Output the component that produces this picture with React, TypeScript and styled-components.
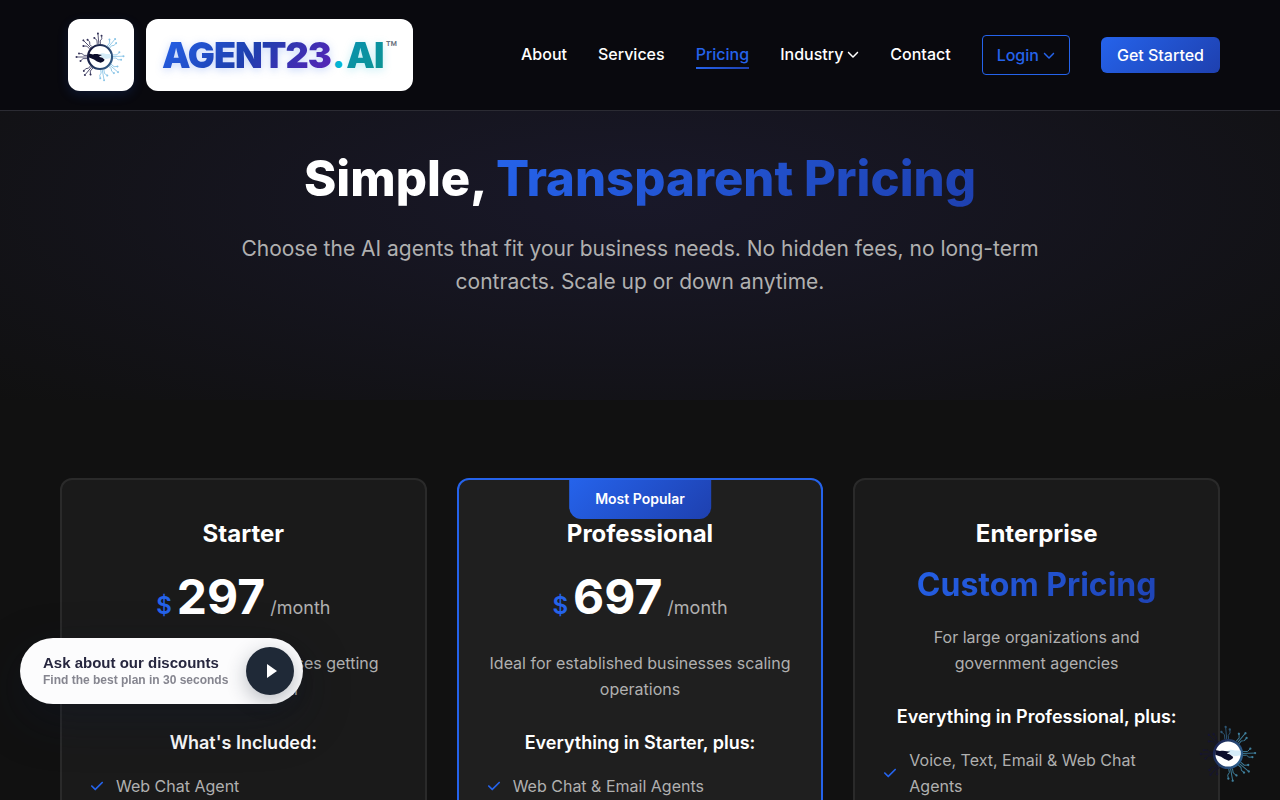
import React from "react";
import styled, { createGlobalStyle, css } from "styled-components";
import { FaCheck, FaChevronDown } from "react-icons/fa6";

const blue = "#2563eb";
const blueGradient = "linear-gradient(135deg, #2563eb 0%, #1e40af 100%)";

const GlobalStyle = createGlobalStyle`
  *, *::before, *::after { box-sizing: border-box; }
  body {
    margin: 0;
    background: #111111;
    color: #ffffff;
    font-family: Inter, "Liberation Sans", sans-serif;
    font-size: 16px;
    line-height: 26px;
  }
  h1, h2, h3, p, ul { margin: 0; padding: 0; }
  a { color: inherit; text-decoration: none; }
  button { font: inherit; cursor: pointer; }
`;

const gradientText = css`
  background: ${blueGradient};
  background-clip: text;
  -webkit-background-clip: text;
  color: transparent;
`;

const Container = styled.div`
  width: 100%;
  max-width: 1200px;
  margin: 0 auto;
  padding: 0 20px;
`;

const Header = styled.header`
  position: sticky;
  top: 0;
  z-index: 10;
  background: #09090e;
  border-bottom: 1px solid #2b2b33;
`;

const HeaderBar = styled(Container)`
  display: flex;
  align-items: center;
  justify-content: space-between;
  min-height: 110px;
`;

const Brand = styled.a`
  display: flex;
  align-items: center;
  gap: 12px;
  margin-left: 8px;
`;

const BrandMark = styled.span`
  display: flex;
  align-items: center;
  justify-content: center;
  width: 66px;
  height: 72px;
  padding: 4px 2px 0 0;
  background: #ffffff;
  border-radius: 12px;
  box-shadow: 0 4px 12px rgba(37, 99, 235, 0.15);
`;

const BrandPlate = styled.span`
  display: flex;
  align-items: center;
  height: 72px;
  padding: 0 16px;
  background: #ffffff;
  border-radius: 12px;
  font-size: 36px;
  font-weight: 900;
  line-height: 44px;
  letter-spacing: -1px;
`;

const BrandName = styled.span`
  background: linear-gradient(135deg, #2563eb 0%, #1e40af 50%, #5b21b6 100%);
  background-clip: text;
  -webkit-background-clip: text;
  color: transparent;
  filter: drop-shadow(0 2px 4px rgba(37, 99, 235, 0.25));
`;

const BrandDot = styled.span`
  margin: 0 2px 0 1px;
  color: #06b6d4;
`;

const BrandSuffix = styled.span`
  padding-right: 2px;
  background: linear-gradient(135deg, #0891b2 0%, #0d9490 100%);
  background-clip: text;
  -webkit-background-clip: text;
  color: transparent;
  filter: drop-shadow(0 2px 4px rgba(6, 182, 212, 0.25));
`;

const TradeMark = styled.span`
  align-self: flex-start;
  margin-top: 18px;
  color: #6b7280;
  font-size: 19px;
  font-weight: 500;
  line-height: 24px;
  letter-spacing: 0;
`;

const Nav = styled.nav`
  display: flex;
  align-items: center;
  gap: 31px;
`;

const NavLink = styled.a<{ $active?: boolean }>`
  display: inline-flex;
  align-items: center;
  gap: 4px;
  font-weight: 500;
  color: ${(p) => (p.$active ? blue : "#ffffff")};
  border: 0 solid transparent;
  border-bottom-width: 2px;
  ${(p) =>
    p.$active &&
    css`
      border-image: linear-gradient(90deg, #2563eb, #1e40af) 1;
    `}
`;

const LoginButton = styled.button`
  display: inline-flex;
  align-items: center;
  gap: 4px;
  height: 40px;
  padding: 0 14px;
  background: transparent;
  border: 1px solid ${blue};
  border-radius: 4px;
  color: ${blue};
  font-weight: 500;
`;

const StartButton = styled.button`
  height: 36px;
  padding: 0 16px;
  background: ${blueGradient};
  border: 0;
  border-radius: 6px;
  color: #ffffff;
  font-weight: 500;
`;

const Hero = styled.section`
  min-height: 289px;
  padding: 38px 20px 0;
  text-align: center;
  background: radial-gradient(ellipse 70% 100% at 50% 31%, #191829 0%, #101010 100%);
`;

const HeroTitle = styled.h1`
  font-size: 49px;
  font-weight: 800;
  line-height: 60px;
`;

const Accent = styled.span`
  ${gradientText}
`;

const HeroText = styled.p`
  max-width: 820px;
  margin: 23px auto 0;
  color: #b0b0b0;
  font-size: 21px;
  line-height: 33px;
`;

const Plans = styled.section`
  padding: 78px 0 80px;
`;

const PlanGrid = styled(Container)`
  display: grid;
  grid-template-columns: repeat(auto-fit, minmax(300px, 1fr));
  gap: 30px;
`;

const PlanCard = styled.article<{ $featured?: boolean }>`
  position: relative;
  padding: 38px 28px 40px;
  background: ${(p) => (p.$featured ? "#1f1f1f" : "#1a1a1a")};
  border: 2px solid ${(p) => (p.$featured ? blue : "#2a2a2a")};
  border-radius: 12px;
  text-align: center;
`;

const Ribbon = styled.span`
  position: absolute;
  top: 0;
  left: 50%;
  transform: translateX(-50%);
  padding: 6px 26px 7px;
  background: ${blueGradient};
  border-radius: 0 0 12px 12px;
  font-size: 14px;
  font-weight: 600;
  white-space: nowrap;
`;

const PlanName = styled.h2`
  font-size: 24px;
  font-weight: 700;
  line-height: 32px;
`;

const Price = styled.p`
  display: flex;
  align-items: baseline;
  justify-content: center;
  gap: 5px;
  margin-top: 16px;
`;

const Currency = styled.span`
  color: ${blue};
  font-size: 24px;
  font-weight: 600;
`;

const Amount = styled.span`
  font-size: 48px;
  font-weight: 700;
  line-height: 62px;
`;

const Period = styled.span`
  color: #b0b0b0;
  font-size: 18px;
`;

const CustomPrice = styled.p`
  margin-top: 15px;
  font-size: 32px;
  font-weight: 700;
  line-height: 40px;
  ${gradientText}
`;

const PlanText = styled.p<{ $tight?: boolean }>`
  max-width: ${(p) => (p.$tight ? "240px" : "none")};
  margin: ${(p) => (p.$tight ? "19px" : "22px")} auto 0;
  color: #b0b0b0;
`;

const ListTitle = styled.h3`
  margin-top: 27px;
  font-size: 18px;
  font-weight: 600;
  line-height: 28px;
`;

const FeatureList = styled.ul`
  display: grid;
  gap: 12px;
  margin-top: 16px;
  list-style: none;
  text-align: left;
`;

const Feature = styled.li`
  display: flex;
  align-items: center;
  gap: 12px;
  color: #b0b0b0;

  svg {
    flex: none;
    color: ${blue};
  }
`;

const DiscountBar = styled.aside`
  position: fixed;
  left: 20px;
  bottom: 96px;
  z-index: 20;
  display: flex;
  align-items: center;
  gap: 18px;
  height: 66px;
  padding: 0 9px 0 23px;
  background: #fcfcfd;
  border-radius: 33px;
  box-shadow: 0 16px 48px rgba(15, 23, 42, 0.35);
  font-family: "Liberation Sans", Arial, sans-serif;
  font-weight: 700;
`;

const DiscountTitle = styled.p`
  color: #27273f;
  font-size: 15px;
  line-height: 18px;
`;

const DiscountText = styled.p`
  color: #85858f;
  font-size: 12px;
  line-height: 16px;
`;

const PlayButton = styled.button`
  display: flex;
  align-items: center;
  justify-content: center;
  width: 48px;
  height: 48px;
  padding: 0;
  background: #1f2937;
  border: 0;
  border-radius: 50%;
  box-shadow: 0 6px 20px rgba(31, 41, 55, 0.3);
`;

const ChatButton = styled.button`
  position: fixed;
  right: 22px;
  bottom: 16px;
  z-index: 20;
  display: flex;
  padding: 0;
  background: transparent;
  border: 0;
`;

const branch = "M0-13V-23M-1.6-13V-17L-4-19.5M1.6-13V-16L3.4-18V-20.5";
const tips: [number, number][] = [[0, -23.5], [-4, -19.5], [3.4, -21]];

function Emblem({ size, dark }: { size: number; dark?: boolean }) {
  const id = dark ? "emblem-dark" : "emblem-light";
  return (
    <svg width={size} height={size} viewBox="-26 -26 52 52" aria-hidden="true">
      <defs>
        <linearGradient id={id} gradientUnits="userSpaceOnUse" x1="-12" y1="-6" x2="14" y2="6">
          <stop offset="0" stopColor={dark ? "#1b2350" : "#14163a"} />
          <stop offset="1" stopColor={dark ? "#2f6592" : "#34608c"} />
        </linearGradient>
      </defs>
      {[-5, 40, 88, 130, 170, 220, 270, 315].map((angle) => {
        const right = angle > 0 && angle <= 180;
        const color = right ? (dark ? "#3f7f9c" : "#86c3e6") : dark ? (angle === -5 ? "#2d5674" : "#161530") : "#35345a";
        return (
          <g key={angle} transform={`rotate(${angle})`} stroke={color} strokeWidth="0.8" fill="none">
            <path d={branch} />
            {tips.map(([x, y]) => (
              <circle key={`${x}${y}`} cx={x} cy={y} r="1" fill={color} stroke="none" />
            ))}
          </g>
        );
      })}
      <circle r="12" fill="#ffffff" stroke={`url(#${id})`} strokeWidth="2.2" />
      <path d="M-1-2C1-4 3-4 6-3L11-3V1L6 2L3 1Z" fill="#d5ecf8" />
      <path
        d="M-11-3.5L-7-2.6C-5-3 -3-3 -1-2.4L2-2L-1-0.6C0 0.2 1 0.2 2 0.6L4.5 2.6L4 4L2.4 5L0.6 5.8L-3 4.4L-6 2.4L-11 0.6Z"
        fill="#0b0d2b"
      />
    </svg>
  );
}

interface Plan {
  name: string;
  amount?: string;
  text: string;
  listTitle: string;
  features: string[];
  featured?: boolean;
}

const plans: Plan[] = [
  {
    name: "Starter",
    amount: "297",
    text: "Perfect for small businesses getting started with AI",
    listTitle: "What's Included:",
    features: ["Web Chat Agent"],
  },
  {
    name: "Professional",
    amount: "697",
    text: "Ideal for established businesses scaling operations",
    listTitle: "Everything in Starter, plus:",
    features: ["Web Chat & Email Agents"],
    featured: true,
  },
  {
    name: "Enterprise",
    text: "For large organizations and government agencies",
    listTitle: "Everything in Professional, plus:",
    features: ["Voice, Text, Email & Web Chat Agents"],
  },
];

export default function App() {
  return (
    <>
      <GlobalStyle />
      <Header>
        <HeaderBar>
          <Brand href="#home">
            <BrandMark>
              <Emblem size={52} />
            </BrandMark>
            <BrandPlate>
              <BrandName>AGENT23</BrandName>
              <BrandDot>.</BrandDot>
              <BrandSuffix>AI</BrandSuffix>
              <TradeMark>™</TradeMark>
            </BrandPlate>
          </Brand>
          <Nav>
            <NavLink href="#about">About</NavLink>
            <NavLink href="#services">Services</NavLink>
            <NavLink href="#pricing" $active aria-current="page">
              Pricing
            </NavLink>
            <NavLink href="#industry">
              Industry <FaChevronDown size={12} />
            </NavLink>
            <NavLink href="#contact">Contact</NavLink>
            <LoginButton>
              Login <FaChevronDown size={12} />
            </LoginButton>
            <StartButton>Get Started</StartButton>
          </Nav>
        </HeaderBar>
      </Header>
      <main>
        <Hero>
          <HeroTitle>
            Simple, <Accent>Transparent Pricing</Accent>
          </HeroTitle>
          <HeroText>
            Choose the AI agents that fit your business needs. No hidden fees, no long-term
            contracts. Scale up or down anytime.
          </HeroText>
        </Hero>
        <Plans>
          <PlanGrid>
            {plans.map((plan) => (
              <PlanCard key={plan.name} $featured={plan.featured}>
                {plan.featured && <Ribbon>Most Popular</Ribbon>}
                <PlanName>{plan.name}</PlanName>
                {plan.amount ? (
                  <Price>
                    <Currency>$</Currency>
                    <Amount>{plan.amount}</Amount>
                    <Period>/month</Period>
                  </Price>
                ) : (
                  <CustomPrice>Custom Pricing</CustomPrice>
                )}
                <PlanText $tight={!plan.amount}>{plan.text}</PlanText>
                <ListTitle>{plan.listTitle}</ListTitle>
                <FeatureList>
                  {plan.features.map((feature) => (
                    <Feature key={feature}>
                      <FaCheck size={14} />
                      {feature}
                    </Feature>
                  ))}
                </FeatureList>
              </PlanCard>
            ))}
          </PlanGrid>
        </Plans>
      </main>
      <DiscountBar>
        <div>
          <DiscountTitle>Ask about our discounts</DiscountTitle>
          <DiscountText>Find the best plan in 30 seconds</DiscountText>
        </div>
        <PlayButton aria-label="Play">
          <svg width="16" height="16" viewBox="0 0 16 16" aria-hidden="true">
            <path d="M5 1L15 8L5 15Z" fill="#ffffff" />
          </svg>
        </PlayButton>
      </DiscountBar>
      <ChatButton aria-label="Open chat">
        <Emblem size={60} dark />
      </ChatButton>
    </>
  );
}
